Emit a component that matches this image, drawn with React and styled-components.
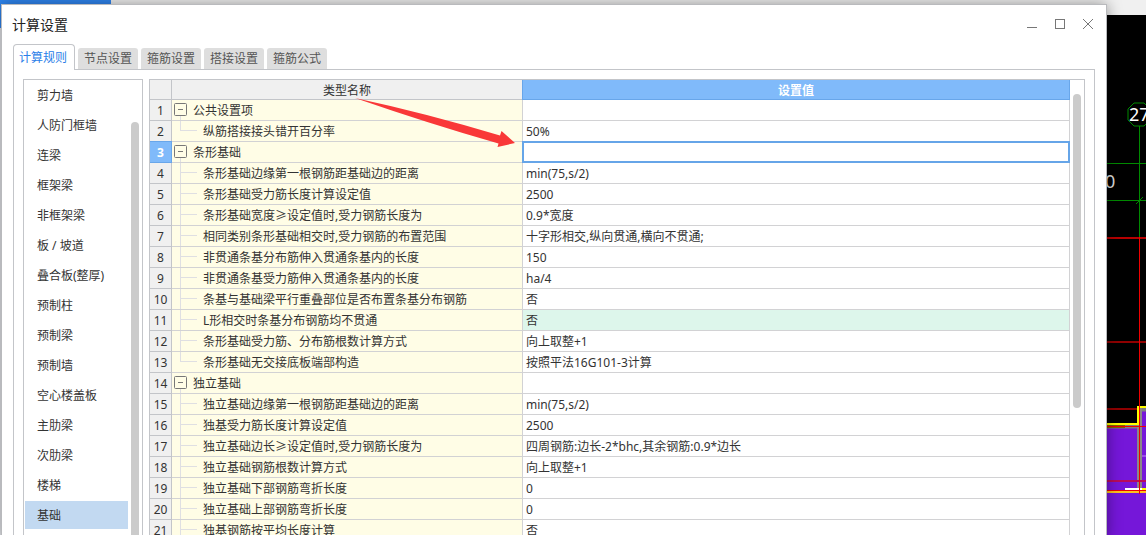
import React, { useState } from 'react';
import styled, { createGlobalStyle, css } from 'styled-components';

const categories = [
  '剪力墙', '人防门框墙', '连梁', '框架梁', '非框架梁', '板 / 坡道', '叠合板(整厚)', '预制柱',
  '预制梁', '预制墙', '空心楼盖板', '主肋梁', '次肋梁', '楼梯', '基础',
];

const tabs = ['计算规则', '节点设置', '箍筋设置', '搭接设置', '箍筋公式'];

const rows = [
  { name: '公共设置项', group: true },
  { name: '纵筋搭接接头错开百分率', value: '50%', last: true },
  { name: '条形基础', group: true },
  { name: '条形基础边缘第一根钢筋距基础边的距离', value: 'min(75,s/2)' },
  { name: '条形基础受力筋长度计算设定值', value: '2500' },
  { name: '条形基础宽度≥设定值时,受力钢筋长度为', value: '0.9*宽度' },
  { name: '相同类别条形基础相交时,受力钢筋的布置范围', value: '十字形相交,纵向贯通,横向不贯通;' },
  { name: '非贯通条基分布筋伸入贯通条基内的长度', value: '150' },
  { name: '非贯通条基受力筋伸入贯通条基内的长度', value: 'ha/4' },
  { name: '条基与基础梁平行重叠部位是否布置条基分布钢筋', value: '否' },
  { name: 'L形相交时条基分布钢筋均不贯通', value: '否', changed: true },
  { name: '条形基础受力筋、分布筋根数计算方式', value: '向上取整+1' },
  { name: '条形基础无交接底板端部构造', value: '按照平法16G101-3计算', last: true },
  { name: '独立基础', group: true },
  { name: '独立基础边缘第一根钢筋距基础边的距离', value: 'min(75,s/2)' },
  { name: '独基受力筋长度计算设定值', value: '2500' },
  { name: '独立基础边长≥设定值时,受力钢筋长度为', value: '四周钢筋:边长-2*bhc,其余钢筋:0.9*边长' },
  { name: '独立基础钢筋根数计算方式', value: '向上取整+1' },
  { name: '独立基础下部钢筋弯折长度', value: '0' },
  { name: '独立基础上部钢筋弯折长度', value: '0' },
  { name: '独基钢筋按平均长度计算', value: '否' },
];

const GlobalStyle = createGlobalStyle`
  * {
    box-sizing: border-box;
  }

  body {
    margin: 0;
    color: #333;
    font-family: 'Noto Sans', 'Noto Sans CJK SC', sans-serif;
    font-size: 12px;
    line-height: 20px;
  }

  button {
    font: inherit;
    color: inherit;
    border: 0;
    padding: 0;
    background: none;
    cursor: pointer;
  }
`;

const Desktop = styled.div`
  position: relative;
  height: 100vh;
  overflow: hidden;
`;

const Backdrop = styled.div`
  position: absolute;
  inset: 0;
  display: flex;
  flex-direction: column;
  background: linear-gradient(#2f86f0 28px, #e4e6ea 28px);
`;

const Ribbon = styled.div`
  flex: none;
  height: 15px;
  background: #f0f0f0;

  &::before {
    content: '';
    display: block;
    width: 111px;
    height: 100%;
    background: #2f86f0;
  }
`;

const Drawing = styled.div`
  flex: 1;
  display: flex;
  justify-content: flex-end;
  align-items: flex-start;
  margin-left: 1px;
  background: #000;

  svg {
    flex: none;
    font-family: 'Noto Sans', sans-serif;
  }
`;

const Dialog = styled.section`
  position: relative;
  display: flex;
  flex-direction: column;
  height: 100%;
  margin: 4px 39px 0 1px;
  border: 1px solid #b9babd;
  border-bottom: 0;
  background: #fff;
  box-shadow: 0 0 14px rgba(0, 0, 0, 0.4);
`;

const TitleBar = styled.header`
  flex: none;
  display: flex;
  align-items: center;
  justify-content: space-between;
  height: 39px;
  padding: 0 10px;

  h1 {
    margin: 0;
    font-size: 14px;
    font-weight: 400;
    color: #222;
  }
`;

const WindowButtons = styled.div`
  display: flex;
  gap: 12px;

  button {
    width: 16px;
    height: 16px;
  }

  svg {
    display: block;
    fill: none;
    stroke: #777;
  }
`;

const TabList = styled.div`
  flex: none;
  display: flex;
  align-items: flex-end;
  gap: 3px;
  height: 26px;
  margin: 0 11px -1px;
  z-index: 1;
`;

const Tab = styled.button`
  width: 60px;
  height: 21px;
  margin-bottom: 1px;
  padding-top: 1px;
  border-radius: 3px 3px 0 0;
  background: #dedede;
  color: #555;

  ${({ $active }) => $active && css`
    width: 62px;
    height: 26px;
    margin-bottom: 0;
    padding: 1px 2px 0 0;
    border: 1px solid #c3c5c9;
    border-bottom: 0;
    border-radius: 4px 4px 0 0;
    background: #fff;
    color: #2a80e8;
  `}
`;

const Pane = styled.div`
  flex: 1;
  min-height: 0;
  display: flex;
  gap: 6px;
  margin: 0 11px;
  padding: 9px 9px 0;
  border: 1px solid #c3c5c9;
  border-bottom: 0;
`;

const Sidebar = styled.nav`
  flex: none;
  display: flex;
  justify-content: space-between;
  width: 120px;
  padding: 1px 3px 0 1px;
  border: 1px solid #c3c5c9;
  border-bottom: 0;
  overflow: hidden;
`;

const CategoryList = styled.ul`
  width: 103px;
  margin: 0;
  padding: 0;
  list-style: none;
`;

const Category = styled.button`
  display: block;
  width: 100%;
  height: 28px;
  margin-bottom: 2px;
  padding: 2px 0 0 12px;
  text-align: left;
  background: ${({ $active }) => ($active ? '#c2d9f1' : 'transparent')};
`;

const Scrollbar = styled.div`
  flex: none;
  width: 8px;
  border-radius: 4px;
  background: #cbcbcb;
`;

const SidebarScrollbar = styled(Scrollbar)`
  margin-top: 41px;
`;

const GridScrollbar = styled(Scrollbar)`
  height: 314px;
  margin: 14px 3px 0;
`;

const GridBox = styled.div`
  position: relative;
  flex: 1;
  display: flex;
  align-items: flex-start;
  min-width: 0;
  border: 1px solid #c3c5c9;
  border-bottom: 0;
  overflow: hidden;
`;

const Grid = styled.table`
  flex: 1;
  width: 100%;
  table-layout: fixed;
  border-collapse: separate;
  border-spacing: 0;

  th, td {
    height: 21px;
    padding: 2px 0 0;
    border-right: 1px solid #d2d2d4;
    border-bottom: 1px solid #d2d2d4;
    font-weight: 400;
    line-height: 18px;
    white-space: nowrap;
  }

  thead th {
    height: 20px;
    line-height: 17px;
  }
`;

const selectedHead = css`
  position: relative;
  background: #80bafa;
  color: #fff;
  font-weight: 700;

  &::after {
    content: '';
    position: absolute;
    inset: -1px;
    border: 1px solid #68a6ea;
  }
`;

const HeadCell = styled.th`
  && {
    border-color: #c3c5c9;
    background: #f0f0f0;
    ${({ $selected }) => $selected && selectedHead}
  }
`;

const NameCell = styled.td`
  && {
    padding: 0;
    background: #fffde6;
  }
`;

const NameContent = styled.div`
  display: flex;
  height: 20px;
`;

const NameText = styled.span`
  padding-top: 2px;
`;

const BranchLines = styled.svg`
  flex: none;
  width: 31px;
  height: 20px;
  stroke: #dfdfe2;
`;

const GroupMark = styled.div`
  flex: none;
  display: flex;
  flex-direction: column;
  width: 21px;
  height: 20px;
  padding: 3px 0 0 2px;

  button {
    width: 13px;
    height: 13px;
  }

  svg {
    display: block;
    fill: none;
    stroke: #777;
  }

  &::after {
    content: '';
    width: 1px;
    height: 4px;
    margin-left: 6px;
    background: #dfdfe2;
  }
`;

const ValueCell = styled.td`
  && {
    padding-left: 3px;
    background: ${({ $changed }) => ($changed ? '#ddf6eb' : '#fff')};
  }

  ${({ $focused }) => $focused && css`
    position: relative;

    &::after {
      content: '';
      position: absolute;
      inset: -1px;
      border: 2px solid #66a5e8;
    }
  `}
`;

const Arrow = styled.svg`
  position: absolute;
  top: 17px;
  left: 204px;
  pointer-events: none;
`;

const CadView = () => (
  <svg width="39" height="520" viewBox="1107 15 39 520" fill="none" aria-hidden="true">
    <path d="M1107 163.500H1146M1107 200.500H1146M1139.500 126V237M1136 204l7-7" stroke="#008a00" />
    <path d="M1134 103h10l6 6v11l-6 6h-10l-6-6v-11z" stroke="#008a00" />
    <text x="1129" y="121" fontSize="18" fill="#fff">27</text>
    <text x="1105" y="188" fontSize="18" fill="#ddd">0</text>
    <path d="M1107 424H1138V407H1146V535H1107z" fill="#7517d9" />
    <path d="M1107 426.500H1138M1142 409.500H1146" stroke="#808080" strokeWidth="4" />
    <path d="M1107 426.500H1125" stroke="#7d6500" strokeWidth="3" />
    <path d="M1139.500 408V489" stroke="#8c8688" strokeWidth="5" />
    <path d="M1142 456H1146" stroke="#9b4de8" strokeWidth="2" />
    <path d="M1107 424H1138V407H1146" stroke="#ff0" strokeWidth="2" />
    <path d="M1107 342H1146M1107 409H1137" stroke="#900000" strokeWidth="2" />
    <path d="M1107 481H1146" stroke="#b80c5d" strokeWidth="2" />
    <path d="M1107 491.500H1146" stroke="#ffc21c" strokeWidth="3" />
    <path d="M1125 489.500H1142" stroke="#fff" strokeWidth="3" />
    <path d="M1142 489H1146" stroke="#ff0" strokeWidth="2" />
    <path d="M1107 238H1146" stroke="#b80000" strokeWidth="2" />
    <path d="M1139.500 237V494M1107 426.500H1146M1107 490.500H1146" stroke="#f00000" />
  </svg>
);

const GridRow = ({ row, number, focused, onFocus }) => (
  <tr onClick={onFocus}>
    <HeadCell scope="row" $selected={focused}>{number}</HeadCell>
    <NameCell>
      <NameContent>
        {row.group ? (
          <GroupMark>
            <button type="button" aria-label={`折叠${row.name}`}>
              <svg width="13" height="13">
                <rect x="0.500" y="0.500" width="12" height="12" rx="1" />
                <path d="M4 6.500h5" />
              </svg>
            </button>
          </GroupMark>
        ) : (
          <BranchLines aria-hidden="true">
            <path d={`M8.500 0V${row.last ? 10 : 20}M9 9.500H25`} />
          </BranchLines>
        )}
        <NameText>{row.name}</NameText>
      </NameContent>
    </NameCell>
    <ValueCell $changed={row.changed} $focused={focused}>{row.value}</ValueCell>
  </tr>
);

const App = () => {
  const [tab, setTab] = useState(0);
  const [category, setCategory] = useState('基础');
  const [focusedRow, setFocusedRow] = useState(2);

  return (
    <Desktop>
      <GlobalStyle />
      <Backdrop>
        <Ribbon />
        <Drawing>
          <CadView />
        </Drawing>
      </Backdrop>
      <Dialog role="dialog" aria-labelledby="dialog-title">
        <TitleBar>
          <h1 id="dialog-title">计算设置</h1>
          <WindowButtons>
            <button type="button" aria-label="最小化">
              <svg width="16" height="16"><path d="M3 10.500h10" /></svg>
            </button>
            <button type="button" aria-label="最大化">
              <svg width="16" height="16"><rect x="3.500" y="2.500" width="9" height="9" /></svg>
            </button>
            <button type="button" aria-label="关闭">
              <svg width="16" height="16"><path d="M3 2l10 10M13 2L3 12" /></svg>
            </button>
          </WindowButtons>
        </TitleBar>
        <TabList role="tablist">
          {tabs.map((label, index) => (
            <Tab
              key={label}
              type="button"
              role="tab"
              aria-selected={tab === index}
              $active={tab === index}
              onClick={() => setTab(index)}
            >
              {label}
            </Tab>
          ))}
        </TabList>
        <Pane role="tabpanel">
          <Sidebar>
            <CategoryList>
              {categories.map((item) => (
                <li key={item}>
                  <Category type="button" $active={item === category} onClick={() => setCategory(item)}>
                    {item}
                  </Category>
                </li>
              ))}
            </CategoryList>
            <SidebarScrollbar />
          </Sidebar>
          <GridBox>
            <Grid>
              <colgroup>
                <col width="22" />
                <col width="351" />
                <col />
              </colgroup>
              <thead>
                <tr>
                  <HeadCell aria-label="行号" />
                  <HeadCell scope="col">类型名称</HeadCell>
                  <HeadCell scope="col" $selected>设置值</HeadCell>
                </tr>
              </thead>
              <tbody>
                {rows.map((row, index) => (
                  <GridRow
                    key={row.name}
                    row={row}
                    number={index + 1}
                    focused={index === focusedRow}
                    onFocus={() => setFocusedRow(index)}
                  />
                ))}
              </tbody>
            </Grid>
            <GridScrollbar />
            <Arrow width="164" height="54" viewBox="354 97 164 54" aria-hidden="true">
              <path d="M355 98Q425 113 500 135.500L501.500 131L515 143L497.500 147L498.500 143.500Q430 124 355 98z" fill="#f93838" />
            </Arrow>
          </GridBox>
        </Pane>
      </Dialog>
    </Desktop>
  );
};

export default App;
